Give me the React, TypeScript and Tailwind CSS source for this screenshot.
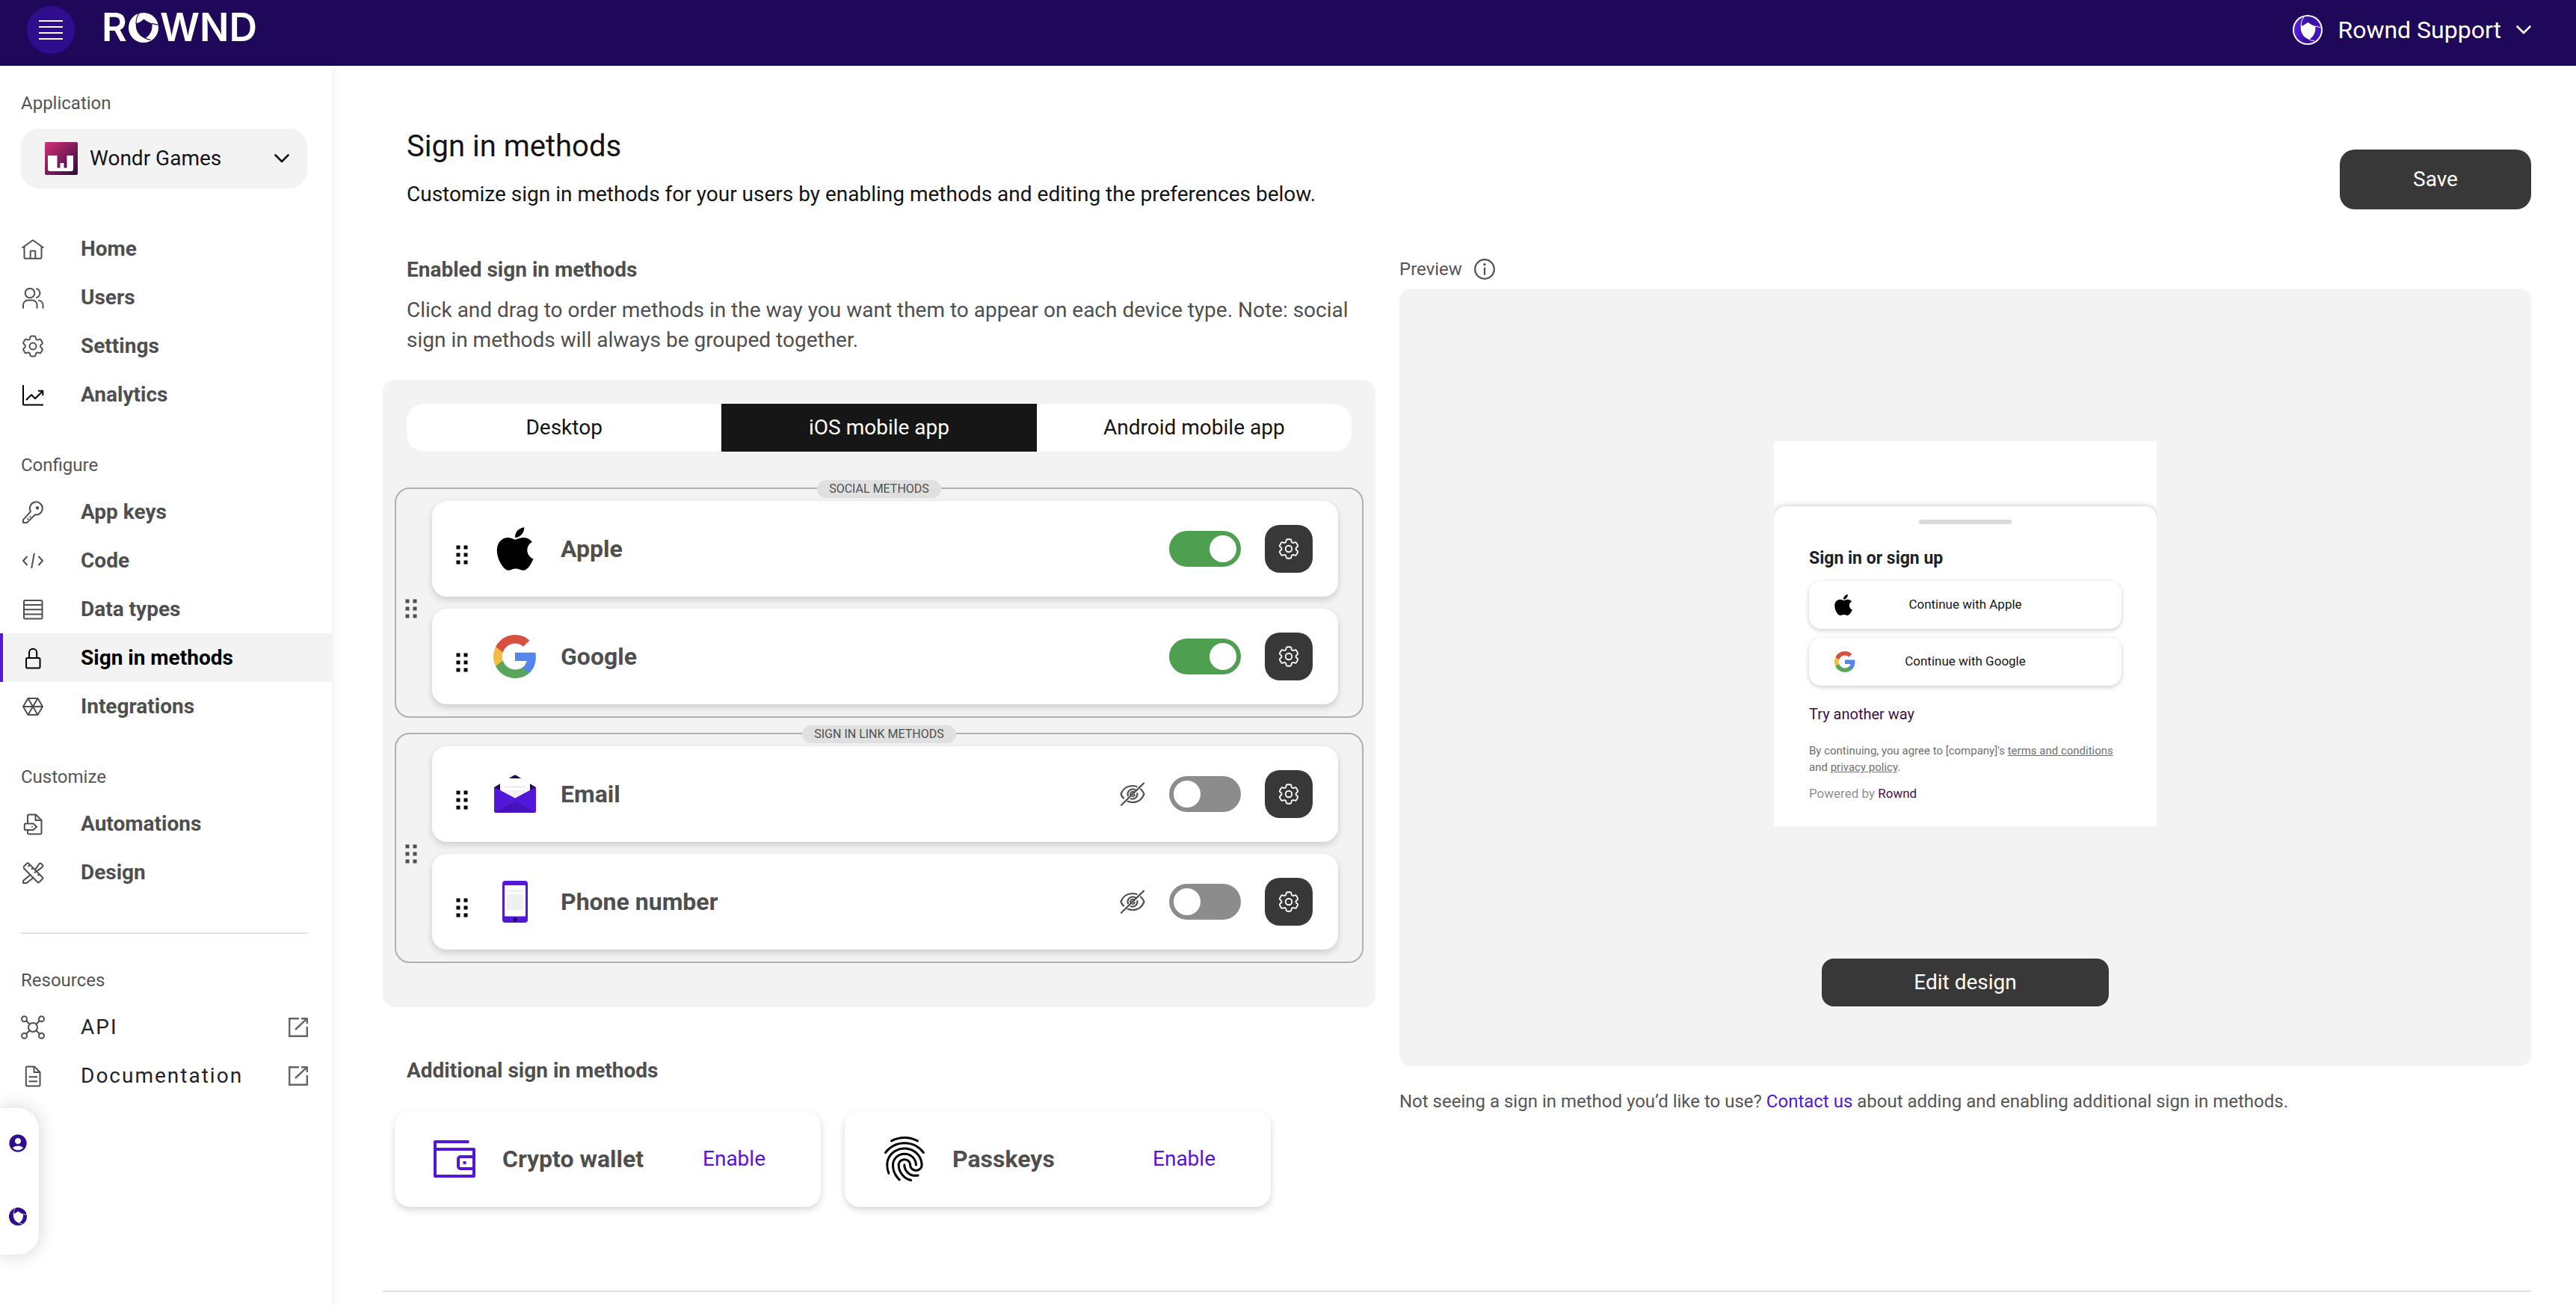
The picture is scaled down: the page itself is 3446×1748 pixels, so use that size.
import { useState, type ReactNode } from "react";
import { FaApple } from "react-icons/fa6";
import { HiOutlineCog6Tooth } from "react-icons/hi2";
import { MdAccountCircle, MdFingerprint } from "react-icons/md";

type IconProps = { children: ReactNode; className?: string };

function LineIcon({ children, className = "" }: IconProps) {
  return (
    <svg
      viewBox="0 0 32 32"
      fill="none"
      stroke="currentColor"
      strokeWidth="2"
      strokeLinejoin="round"
      className={`size-8 shrink-0 ${className}`}
      aria-hidden="true"
    >
      {children}
    </svg>
  );
}

const HomeIcon = () => (
  <LineIcon>
    <path d="M1.5 14.5 16 4.2l14.5 10.3" />
    <path d="M4.5 12.5V27a1.8 1.8 0 0 0 1.8 1.8h19.4A1.8 1.8 0 0 0 27.5 27V12.5" />
    <path d="M12.7 28.5v-9a1 1 0 0 1 1-1h4.6a1 1 0 0 1 1 1v9" />
  </LineIcon>
);

const UsersIcon = () => (
  <LineIcon>
    <circle cx="12" cy="10" r="6.3" />
    <path d="M20.3 4a6.2 6.2 0 0 1 0 12.2" />
    <path d="M3 30.5V26a6.5 6.5 0 0 1 6.5-6.5h5.500a6.5 6.5 0 0 1 6.5 6.5v4.5" />
    <path d="M23.5 19.7a6.5 6.5 0 0 1 6 6.3v4.5" />
  </LineIcon>
);

const SettingsIcon = () => (
  <HiOutlineCog6Tooth className="-mx-0.5 size-9 shrink-0 [stroke-width:1.3]" aria-hidden="true" />
);

const AnalyticsIcon = () => (
  <LineIcon className="text-black">
    <path d="M3 3v25.5a1 1 0 0 0 1 1h26" />
    <path d="m7 23 7-7 5 5 10-9.7" />
    <path d="M23 10.7h6.3V17" />
  </LineIcon>
);

const KeyIcon = () => (
  <LineIcon>
    <path d="M13 15.2 3 26.2v3.7h5.3L19 19.3a8.5 8.5 0 1 0-6-4.1z" />
    <circle cx="22" cy="10.3" r="1.2" fill="currentColor" />
    <path d="m8.5 24.3 1.6 1.6M11.5 21.4l1.5 1.5" />
  </LineIcon>
);

const CodeIcon = () => (
  <LineIcon>
    <path d="M8.5 10 3 16l5.5 6M23.5 10l5.5 6-5.5 6M17.8 6 14.2 26" />
  </LineIcon>
);

const DataIcon = () => (
  <LineIcon>
    <rect x="4" y="4" width="24.5" height="24.5" rx="1.5" />
    <path d="M4 10h24.5M4 16.2h24.5M4 22.4h24.5" />
  </LineIcon>
);

const LockIcon = () => (
  <LineIcon>
    <rect x="7" y="16" width="18.5" height="13.5" rx="1.5" />
    <path d="M11 16V8.8a5.1 5.1 0 0 1 10.2 0V16" />
  </LineIcon>
);

const HexIcon = () => (
  <LineIcon>
    <path d="M3 16 9.5 5h13L29 16l-6.5 11h-13z" />
    <path d="M3 16h26M9.5 5l13 22M22.5 5l-13 22" />
    <circle cx="16" cy="16" r="2" fill="currentColor" stroke="none" />
  </LineIcon>
);

const AutomationIcon = () => (
  <LineIcon>
    <path d="M9 15.5V5a1.5 1.5 0 0 1 1.5-1.5H20l7.5 7.5v17a1.5 1.5 0 0 1-1.5 1.5H10.5A1.5 1.5 0 0 1 9 28v-4" />
    <path d="M19.5 3.5V11h7.5" />
    <path d="M5.8 15.5h10.7L21 19.7 16.5 24H5.8a1 1 0 0 1-1-1v-6.5a1 1 0 0 1 1-1z" />
    <circle cx="15" cy="19.7" r="1" fill="currentColor" stroke="none" />
  </LineIcon>
);

const DesignIcon = () => (
  <LineIcon>
    <path d="M3 8.7 8.3 3.5a1.2 1.2 0 0 1 1.7 0L29 22.5a1.2 1.2 0 0 1 0 1.7l-4.8 4.8a1.2 1.2 0 0 1-1.7 0L3.3 9.8" />
    <path d="m12 5.5-2.5 2.5M16 9.7l-2 2M20.5 14 18 16.5M24.5 18l-2 2" />
    <path d="m18.8 12.2 6-8.2a1.5 1.5 0 0 1 2.2 0l2 2a1.5 1.5 0 0 1 0 2.200l-8 6.2M12.5 19 3 27v3h4.500l9-7" />
  </LineIcon>
);

const ApiIcon = () => (
  <LineIcon>
    <circle cx="16" cy="16" r="6" />
    <circle cx="4.5" cy="4.7" r="3.5" />
    <circle cx="27.5" cy="4.7" r="3.5" />
    <circle cx="4.5" cy="27.3" r="3.5" />
    <circle cx="27.5" cy="27.3" r="3.5" />
    <path d="m7 7.2 4.6 4.5M25 7.2l-4.6 4.5M7 24.8l4.6-4.5M25 24.8l-4.6-4.5" />
  </LineIcon>
);

const DocIcon = () => (
  <LineIcon>
    <path d="M8 3.5h10l7.5 7.5v17a1.5 1.5 0 0 1-1.5 1.5H8A1.5 1.5 0 0 1 6.8 28V5A1.5 1.5 0 0 1 8 3.5z" />
    <path d="M17.5 3.5V11h8M10.5 17.3H22M10.5 23.3H22" />
  </LineIcon>
);

const ExternalIcon = () => (
  <svg viewBox="0 0 28 28" fill="none" stroke="#666666" strokeWidth="2.4" className="size-7 shrink-0" aria-hidden="true">
    <path d="M15 2.2H2.2v23.6h23.6V13" />
    <path d="M18 2.2h7.8V9M25.8 2.2 10 17" strokeLinejoin="round" />
  </svg>
);

const ChevronIcon = () => (
  <svg
    viewBox="0 0 20 12"
    fill="none"
    stroke="currentColor"
    strokeWidth="2.6"
    strokeLinecap="round"
    strokeLinejoin="round"
    className="pointer-events-none h-3 w-5 shrink-0"
    aria-hidden="true"
  >
    <path d="m1.5 1.5 8.5 8.5 8.5-8.5" />
  </svg>
);

function GripIcon({ className }: { className: string }) {
  return (
    <svg viewBox="0 0 16 26" fill="currentColor" className={`h-[26px] w-4 shrink-0 ${className}`} aria-hidden="true">
      {[0.5, 10.5, 20.5].map((y) => (
        <g key={y}>
          <rect x="0.5" y={y} width="5" height="5" />
          <rect x="10.5" y={y} width="5" height="5" />
        </g>
      ))}
    </svg>
  );
}

const GoogleIcon = ({ className }: { className: string }) => (
  <svg viewBox="1 1 22 22" className={className} aria-hidden="true">
    <path fill="#5485ed" d="M22.56 12.25c0-.78-.07-1.53-.2-2.25H12v4.26h5.92c-.26 1.37-1.04 2.53-2.21 3.31v2.77h3.57c2.08-1.92 3.28-4.74 3.28-8.09z" />
    <path fill="#58a55c" d="M12 23c2.97 0 5.46-.98 7.28-2.66l-3.57-2.77c-.98.66-2.23 1.06-3.71 1.06-2.86 0-5.29-1.93-6.16-4.53H2.18v2.84C3.99 20.53 7.7 23 12 23z" />
    <path fill="#f2bd42" d="M5.84 14.09c-.22-.66-.35-1.36-.35-2.09s.13-1.43.35-2.09V7.07H2.18C1.43 8.55 1 10.22 1 12s.43 3.45 1.18 4.93l2.85-2.22.81-.62z" />
    <path fill="#d8503f" d="M12 5.38c1.62 0 3.06.56 4.21 1.64l3.15-3.15C17.45 2.09 14.97 1 12 1 7.7 1 3.99 3.47 2.18 7.07l3.66 2.84c.87-2.6 3.3-4.53 6.16-4.53z" />
  </svg>
);

const EmailIcon = () => (
  <svg viewBox="0 0 56 52" className="h-[52px] w-14" aria-hidden="true">
    <path d="M0 17 26 1.2q2-1.2 4 0L56 17v10H0z" fill="#1f0859" />
    <path d="M8 7a2 2 0 0 1 2-2h36a2 2 0 0 1 2 2v20H8z" fill="#ffffff" />
    <path d="M14 15h28v3H14zM14 21h28v10H14z" fill="#f0f0f0" />
    <path d="M0 16.5 28 31.5l28-15V49a2 2 0 0 1-2 2H2a2 2 0 0 1-2-2z" fill="#5317d8" />
    <path d="M1.5 50.5 25 37q3-1.6 6 0l23.5 13.5z" fill="#4512bd" />
  </svg>
);

const PhoneIcon = () => (
  <svg viewBox="0 0 34 56" className="h-14 w-[34px]" aria-hidden="true">
    <rect width="34" height="56" rx="4" fill="#5317d8" />
    <rect x="3" y="6" width="28" height="41.5" rx="1" fill="#ffffff" />
    <rect x="6" y="12" width="22" height="3" fill="#f0f0f0" />
    <rect x="6" y="18" width="22" height="21.5" fill="#efefef" />
    <circle cx="17" cy="51.8" r="2.8" fill="#1f0859" />
  </svg>
);

const WalletIcon = () => (
  <svg viewBox="0 0 56 50" fill="none" stroke="#5317d8" strokeWidth="4" strokeLinejoin="round" className="h-[50px] w-14" aria-hidden="true">
    <path d="M47.5 2H2v46h52V12H2" />
    <path d="M54 22H36a3 3 0 0 0-3 3v10a3 3 0 0 0 3 3h18" />
    <path d="M41.5 28v4" />
  </svg>
);

const EyeOffIcon = () => (
  <svg viewBox="0 0 34 32" fill="none" stroke="#4f4f4f" strokeWidth="2.2" strokeLinecap="round" className="h-8 w-[34px] shrink-0" aria-hidden="true">
    <path d="M22.5 6A17 17 0 0 0 17 5C8.5 5 3.5 10.5 1.5 16c.8 2.2 2 4 3.5 5.6" />
    <path d="M28 9.5c2 1.7 3.6 4 4.5 6.5-2 5.5-7 11-15.5 11-2.4 0-4.5-.5-6.3-1.2" />
    <path d="M21 10.7A6.6 6.6 0 0 0 11 18.3M23.4 15a6.6 6.6 0 0 1-8.5 7.3" />
    <path d="M18.5 13.2a3.2 3.2 0 0 0-4.3 3.6M19.9 16.8a3.2 3.2 0 0 1-2.6 2.4" />
    <path d="M32 1.5 2 30.8" />
  </svg>
);

const InfoIcon = () => (
  <svg viewBox="0 0 28 28" fill="none" stroke="#4f4f4f" strokeWidth="2.2" className="size-7" aria-hidden="true">
    <circle cx="14" cy="14" r="12.8" />
    <path d="M14 12.5V21" strokeLinecap="round" />
    <circle cx="14" cy="7.8" r="1.7" fill="#4f4f4f" stroke="none" />
  </svg>
);

/* Shield inside a three-bladed iris ring. */
function RowndMark({ ring, shield, className }: { ring: string; shield: string; className: string }) {
  return (
    <svg viewBox="0 0 40 40" className={className} aria-hidden="true">
      <defs>
        <linearGradient id="iris" x1="0" y1="0.4" x2="1" y2="0.5">
          <stop offset="0" stopColor="#5a1fe6" />
          <stop offset="0.5" stopColor="#35109a" />
          <stop offset="1" stopColor="#4714c4" />
        </linearGradient>
      </defs>
      <circle cx="20" cy="20" r="20" fill={ring} />
      <path d="M9.8 14.2Q16 13 20.3 8.5 26 13 31.6 14.8C32 24 29 30.5 22 34.3 13.5 31 9 24 9.8 14.2z" fill={shield} />
      <path d="M10 15Q9.8 6.5 14 1M31 14.4l8.5 2M21 33.5q4 2.5 8.5 2.6" fill="none" stroke={shield} strokeWidth="1.1" />
    </svg>
  );
}

const SupportAvatar = () => (
  <span className="flex size-10 items-center justify-center rounded-full bg-white">
    <RowndMark ring="url(#iris)" shield="#ffffff" className="size-9" />
  </span>
);

function Header() {
  return (
    <header className="flex h-[88px] items-center justify-between bg-[#1f0859] pr-[60px] pb-2 pl-9 text-white">
      <div className="flex items-center gap-9">
        <button type="button" aria-label="Toggle menu" className="flex size-16 flex-col items-center justify-center gap-1.5 rounded-full bg-[#2f0d8c]">
          <span className="h-0.5 w-8 bg-white" />
          <span className="h-0.5 w-8 bg-white" />
          <span className="h-0.5 w-8 bg-white" />
          <span className="h-0.5 w-8 bg-white" />
        </button>
        <a href="#home" className="mb-1.5 flex items-center gap-0.5 font-['Inter',sans-serif] text-[52px] leading-[52px] font-semibold">
          <span>R</span>
          <RowndMark ring="#ffffff" shield="#1f0859" className="size-10" />
          <span>WND</span>
        </a>
      </div>
      <button type="button" className="flex items-center gap-5 text-[32px] leading-10">
        <SupportAvatar />
        <span>Rownd Support</span>
        <ChevronIcon />
      </button>
    </header>
  );
}

type NavEntry = { label: string; icon: ReactNode; active?: boolean };

function NavList({ items }: { items: NavEntry[] }) {
  return (
    <ul>
      {items.map((item) => (
        <li key={item.label}>
          <a
            href={`#${item.label.toLowerCase().replaceAll(" ", "-")}`}
            aria-current={item.active ? "page" : undefined}
            className={
              item.active
                ? "flex h-[65px] items-center gap-12 border-l-4 border-[#5317d8] bg-[#f3f3f3] pl-6 text-[28px] font-bold text-black"
                : "flex h-[65px] items-center gap-12 border-l-4 border-transparent pl-6 text-[28px] font-bold text-[#4f4f4f]"
            }
          >
            {item.icon}
            {item.label}
          </a>
        </li>
      ))}
    </ul>
  );
}

const NavHeading = ({ children }: { children: ReactNode }) => (
  <h2 className="mt-[46px] mb-3.5 px-7 text-2xl leading-8 text-[#555555]">{children}</h2>
);

function Sidebar() {
  return (
    <nav className="w-[444px] shrink-0 bg-white pt-[34px] shadow-[2px_0_12px_rgba(0,0,0,0.06)]">
      <label htmlFor="application" className="block px-7 text-2xl leading-8 text-[#555555]">
        Application
      </label>
      <div className="mt-[18px] mr-[33px] ml-7 flex h-20 items-center rounded-3xl bg-[#f3f3f3] pr-6 pl-8 text-[#141414]">
        <svg viewBox="0 0 44 44" className="size-11 shrink-0" aria-hidden="true">
          <defs>
            <linearGradient id="tile" x1="0" y1="0" x2="1" y2="1">
              <stop offset="0" stopColor="#d42f76" />
              <stop offset="1" stopColor="#2e0b40" />
            </linearGradient>
          </defs>
          <rect width="44" height="44" rx="2" fill="url(#tile)" />
          <path d="M4 18h12.5v16.5h4V28h5v6.5h4V18H38v18q0 3-3 3H7q-3 0-3-3z" fill="#ffffff" />
        </svg>
        <select id="application" className="ml-4 flex-1 appearance-none bg-transparent text-[28px] leading-10 outline-none">
          <option>Wondr Games</option>
        </select>
        <ChevronIcon />
      </div>
      <div className="mt-12">
        <NavList
          items={[
            { label: "Home", icon: <HomeIcon /> },
            { label: "Users", icon: <UsersIcon /> },
            { label: "Settings", icon: <SettingsIcon /> },
            { label: "Analytics", icon: <AnalyticsIcon /> },
          ]}
        />
      </div>
      <NavHeading>Configure</NavHeading>
      <NavList
        items={[
          { label: "App keys", icon: <KeyIcon /> },
          { label: "Code", icon: <CodeIcon /> },
          { label: "Data types", icon: <DataIcon /> },
          { label: "Sign in methods", icon: <LockIcon />, active: true },
          { label: "Integrations", icon: <HexIcon /> },
        ]}
      />
      <NavHeading>Customize</NavHeading>
      <NavList
        items={[
          { label: "Automations", icon: <AutomationIcon /> },
          { label: "Design", icon: <DesignIcon /> },
        ]}
      />
      <hr className="mt-12 mr-[33px] ml-7 border-t-2 border-[#dedede]" />
      <NavHeading>Resources</NavHeading>
      <ul>
        {[
          { label: "API", icon: <ApiIcon /> },
          { label: "Documentation", icon: <DocIcon /> },
        ].map((item) => (
          <li key={item.label}>
            <a href={`#${item.label.toLowerCase()}`} className="flex h-[65px] items-center pr-[31px] pl-7 text-[#4f4f4f]">
              {item.icon}
              <span className="ml-12 flex-1 text-[28px] tracking-[2px] text-[#212529]">{item.label}</span>
              <ExternalIcon />
            </a>
          </li>
        ))}
      </ul>
    </nav>
  );
}

function QuickDock() {
  return (
    <div className="absolute top-[1482px] left-0 flex h-[196px] w-[52px] flex-col items-center gap-[72px] rounded-r-[28px] bg-white pt-[33px] pr-1 shadow-[0_0_24px_rgba(0,0,0,0.18)]">
      <button type="button" aria-label="Account">
        <MdAccountCircle className="size-7 text-[#2f0d8c]" />
      </button>
      <button type="button" aria-label="Rownd">
        <RowndMark ring="#2f0d8c" shield="#ffffff" className="size-6" />
      </button>
    </div>
  );
}

type Method = { name: string; icon: ReactNode; enabled: boolean };

function MethodCard({ method }: { method: Method }) {
  const [on, setOn] = useState(method.enabled);
  return (
    <li className="flex h-32 items-center rounded-[20px] bg-white pr-[34px] pl-8 shadow-[0_4px_10px_rgba(0,0,0,0.16)]">
      <GripIcon className="mt-4 text-black" />
      <span className="ml-8 flex w-[62px] justify-center">{method.icon}</span>
      <span className="ml-[30px] flex-1 text-[32px] font-bold text-[#4f4f4f]">{method.name}</span>
      {!on && <EyeOffIcon />}
      <input
        type="checkbox"
        role="switch"
        aria-label={method.name}
        checked={on}
        onChange={(e) => setOn(e.target.checked)}
        className="ml-8 h-12 w-24 shrink-0 appearance-none overflow-hidden rounded-full bg-[#8c8c8c] p-1.5 before:block before:size-9 before:rounded-full before:bg-white checked:bg-[#4e9f50] checked:before:ml-12"
      />
      <button type="button" aria-label={`${method.name} settings`} className="ml-8 flex size-16 shrink-0 items-center justify-center rounded-[20px] bg-[#383838] text-white">
        <HiOutlineCog6Tooth className="size-[34px] [stroke-width:1.3]" />
      </button>
    </li>
  );
}

function MethodGroup({ title, methods }: { title: string; methods: Method[] }) {
  return (
    <section className="relative mx-4 flex items-center rounded-[20px] border-2 border-[#b0b0b0] py-4 pr-8 pl-3">
      <h3 className="absolute inset-x-0 -top-3 flex justify-center">
        <span className="rounded-full bg-[#e0e0e0] px-4 text-base leading-6 text-[#4f4f4f] uppercase">{title}</span>
      </h3>
      <GripIcon className="mt-4 text-[#4f4f4f]" />
      <ul className="ml-5 flex flex-1 flex-col gap-4">
        {methods.map((m) => (
          <MethodCard key={m.name} method={m} />
        ))}
      </ul>
    </section>
  );
}

const TABS = ["Desktop", "iOS mobile app", "Android mobile app"];

function MethodsColumn() {
  const [tab, setTab] = useState(1);
  return (
    <div className="pt-[61px]">
      <h2 className="px-8 text-[28px] leading-10 font-bold text-[#4f4f4f]">Enabled sign in methods</h2>
      <p className="mt-3.5 px-8 text-[28px] leading-10 text-[#4f4f4f]">
        Click and drag to order methods in the way you want them to appear on each device type. Note: social sign in methods will
        always be grouped together.
      </p>
      <div className="mt-[33px] flex flex-col gap-5 rounded-2xl bg-[#f3f3f3] pt-8 pb-[59px]">
        <div role="tablist" className="mx-8 mb-7 grid h-16 grid-cols-3 overflow-hidden rounded-3xl bg-white text-[28px]">
          {TABS.map((label, i) => (
            <button
              key={label}
              type="button"
              role="tab"
              aria-selected={i === tab}
              onClick={() => setTab(i)}
              className={i === tab ? "bg-[#161616] text-white" : "text-[#141414]"}
            >
              {label}
            </button>
          ))}
        </div>
        <MethodGroup
          title="Social methods"
          methods={[
            { name: "Apple", icon: <FaApple className="size-[66px] text-black" />, enabled: true },
            { name: "Google", icon: <GoogleIcon className="size-[58px]" />, enabled: true },
          ]}
        />
        <MethodGroup
          title="Sign in link methods"
          methods={[
            { name: "Email", icon: <EmailIcon />, enabled: false },
            { name: "Phone number", icon: <PhoneIcon />, enabled: false },
          ]}
        />
      </div>
      <h2 className="mt-[65px] px-8 text-[28px] leading-10 font-bold text-[#4f4f4f]">Additional sign in methods</h2>
      <ul className="mt-[34px] flex gap-8 px-4">
        {[
          { name: "Crypto wallet", icon: <WalletIcon /> },
          { name: "Passkeys", icon: <MdFingerprint className="size-[72px] text-black" /> },
        ].map((m) => (
          <li key={m.name} className="flex h-32 w-[570px] items-center rounded-[20px] bg-white pr-[74px] pl-11 shadow-[0_4px_10px_rgba(0,0,0,0.16)]">
            <span className="flex w-[72px] justify-center">{m.icon}</span>
            <span className="ml-7 flex-1 text-[32px] font-bold text-[#4f4f4f]">{m.name}</span>
            <button type="button" className="text-[28px] text-[#5317d8]">
              Enable
            </button>
          </li>
        ))}
      </ul>
    </div>
  );
}

function ProviderButton({ icon, label }: { icon: ReactNode; label: string }) {
  return (
    <button
      type="button"
      className="grid h-16 grid-cols-[78px_1fr_78px] items-center rounded-2xl bg-white text-[17px] text-[#141414] shadow-[0_2px_6px_rgba(0,0,0,0.2)]"
    >
      <span className="flex justify-end pr-4">{icon}</span>
      <span>{label}</span>
    </button>
  );
}

function PhonePreview() {
  return (
    <div className="w-[512px] overflow-hidden bg-white pt-[87px]">
      <div className="flex h-[428px] flex-col rounded-t-2xl bg-white px-[47px] pt-[18px] shadow-[0_0_8px_rgba(0,0,0,0.25)]">
        <span className="h-1.5 w-[124px] self-center rounded-full bg-[#dadada]" />
        <h3 className="mt-[30px] text-[23px] leading-8 font-bold text-[#202020]">Sign in or sign up</h3>
        <div className="mt-3.5 flex flex-col gap-3">
          <ProviderButton icon={<FaApple className="size-8 text-black" />} label="Continue with Apple" />
          <ProviderButton icon={<GoogleIcon className="size-7" />} label="Continue with Google" />
        </div>
        <a href="#another-way" className="mt-[22px] self-start text-xl leading-8 text-[#3b0f4c]">
          Try another way
        </a>
        <p className="mt-[22px] text-[15px] leading-[22px] text-[#707070]">
          By continuing, you agree to [company]&#39;s{" "}
          <a href="#terms" className="underline">
            terms and conditions
          </a>{" "}
          and{" "}
          <a href="#privacy" className="underline">
            privacy policy
          </a>
          .
        </p>
        <p className="mt-3 text-[17px] leading-6 text-[#909090]">
          Powered by{" "}
          <a href="#rownd" className="text-[#3b0f4c]">
            Rownd
          </a>
        </p>
      </div>
    </div>
  );
}

function PreviewColumn() {
  return (
    <div className="pt-16">
      <div className="flex h-8 items-center gap-4 text-2xl text-[#555555]">
        <h2>Preview</h2>
        <button type="button" aria-label="About the preview">
          <InfoIcon />
        </button>
      </div>
      <div className="mt-2.5 flex flex-col items-center rounded-2xl bg-[#f3f3f3] pt-[204px] pb-20">
        <PhonePreview />
        <button type="button" className="mt-[177px] h-16 w-96 rounded-2xl bg-[#383838] text-[28px] text-white">
          Edit design
        </button>
      </div>
      <p className="mt-[29px] text-2xl leading-9 text-[#555555]">
        Not seeing a sign in method you’d like to use?{" "}
        <a href="#contact" className="text-[#5317d8]">
          Contact us
        </a>{" "}
        about adding and enabling additional sign in methods.
      </p>
    </div>
  );
}

export default function App() {
  return (
    <div className="relative flex min-h-screen flex-col bg-white font-['Roboto',sans-serif]">
      <Header />
      <div className="flex flex-1">
        <Sidebar />
        <main className="min-w-0 flex-1 pt-21 pr-[60px] pl-[68px]">
          <div className="flex items-end justify-between">
            <div className="px-8 text-[#141414]">
              <h1 className="text-[40px] leading-[48px]">Sign in methods</h1>
              <p className="mt-5 text-[28px] leading-10">
                Customize sign in methods for your users by enabling methods and editing the preferences below.
              </p>
            </div>
            <button type="button" className="h-20 w-64 rounded-[20px] bg-[#383838] text-[28px] text-white">
              Save
            </button>
          </div>
          <div className="grid grid-cols-[minmax(0,1328fr)_minmax(0,1514fr)] gap-8">
            <MethodsColumn />
            <PreviewColumn />
          </div>
          <hr className="mt-28 border-t-2 border-[#e2e2e2]" />
        </main>
      </div>
      <QuickDock />
    </div>
  );
}
